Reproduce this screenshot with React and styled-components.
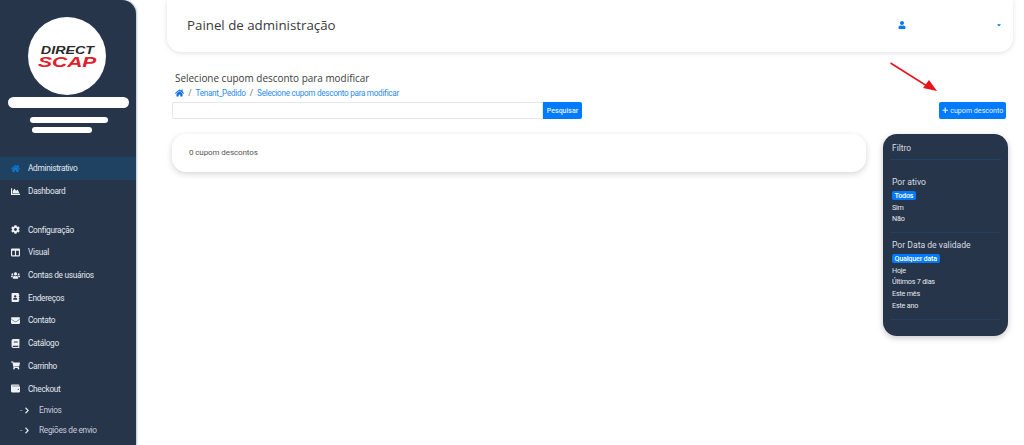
import React from "react";
import styled, { createGlobalStyle } from "styled-components";
import {
  FaHome,
  FaChartArea,
  FaCog,
  FaColumns,
  FaUsers,
  FaAddressBook,
  FaEnvelope,
  FaBook,
  FaShoppingCart,
  FaWallet,
  FaUser,
  FaCaretDown,
  FaPlus,
  FaChevronRight,
} from "react-icons/fa";

const GlobalStyle = createGlobalStyle`
  html, body {
    margin: 0;
    height: 445px;
    overflow: hidden;
    background: #fff;
    font-family: Roboto, "Liberation Sans", sans-serif;
  }
`;

const Page = styled.div`
  display: flex;
  width: 1024px;
  height: 445px;
  overflow: hidden;
  position: relative;
`;

const Sidebar = styled.aside`
  width: 136px;
  height: 445px;
  flex: none;
  background: #263549;
  border-top-right-radius: 14px;
  box-shadow: 1px 0 2px rgba(60, 80, 110, 0.35);
  padding-top: 17px;
  box-sizing: border-box;
  overflow: hidden;
`;

const Logo = styled.div`
  width: 78px;
  height: 78px;
  margin-left: 28px;
  border-radius: 50%;
  background: #fff;
  display: flex;
  flex-direction: column;
  align-items: center;
  justify-content: center;
  font-family: "Liberation Sans", sans-serif;
  font-style: italic;
  font-weight: 700;
  line-height: 1;
`;

const LogoTop = styled.span`
  font-size: 11px;
  color: #2a2a2a;
  transform: scaleX(1.3);
`;

const LogoBottom = styled.span`
  font-size: 14.5px;
  height: 12px;
  line-height: 12px;
  color: #e2202c;
  transform: scaleX(1.45);
`;

const Blur = styled.div`
  background: #fff;
  border-radius: 6px;
  height: ${(p) => p.$h}px;
  width: ${(p) => p.$w}px;
  margin-left: ${(p) => p.$x}px;
  margin-top: ${(p) => p.$top}px;
`;

const Nav = styled.nav`
  margin-top: 24px;
  display: flex;
  flex-direction: column;
`;

const NavItem = styled.a`
  height: 22.7px;
  flex: none;
  display: flex;
  align-items: center;
  padding-left: ${(p) => (p.$sub ? 20 : 11)}px;
  gap: ${(p) => (p.$sub ? 9 : 8)}px;
  font-size: 8.3px;
  letter-spacing: -0.3px;
  color: #e3e7ee;
  background: ${(p) => (p.$active ? "#1f4263" : "transparent")};
  margin-bottom: ${(p) => (p.$gap ? 16 : 0)}px;
  svg {
    width: 9px;
    height: 9px;
    flex: none;
    color: ${(p) => (p.$active ? "#0b7ad6" : "#eef1f5")};
  }
`;

const SubItem = styled(NavItem)`
  height: 20.3px;
  color: #c9c9dc;
`;

const SubArrow = styled.span`
  display: flex;
  align-items: center;
  gap: 2px;
  width: 10px;
  font-size: 8px;
  svg {
    width: 6px;
    height: 7px;
  }
`;

const Main = styled.main`
  flex: 1;
  min-width: 0;
  padding-left: 31px;
  padding-right: 16px;
`;

const Header = styled.header`
  height: 52px;
  width: 846px;
  box-sizing: border-box;
  padding: 0 11px 3px 20px;
  display: flex;
  align-items: center;
  background: #fff;
  border-radius: 0 0 14px 14px;
  box-shadow: 0 1px 5px rgba(0, 0, 0, 0.13);
`;

const Title = styled.h1`
  margin: 0;
  flex: 1;
  font-family: "Open Sans", sans-serif;
  font-size: 13.3px;
  font-weight: 400;
  color: #3a3a3a;
`;

const UserIcon = styled(FaUser)`
  width: 8px;
  height: 8px;
  color: #0a7bf0;
  margin-right: 90px;
`;

const Caret = styled(FaCaretDown)`
  width: 6px;
  height: 6px;
  color: #0a7bf0;
`;

const Content = styled.div`
  padding-top: 19px;
`;

const PageTitle = styled.h2`
  margin: 0 0 0 8px;
  font-family: "Open Sans", sans-serif;
  font-weight: 400;
  font-size: 9.95px;
  line-height: 14px;
  color: #3c3c3c;
`;

const Breadcrumb = styled.div`
  margin: 2px 0 0 8px;
  height: 11px;
  display: flex;
  align-items: center;
  gap: 4.2px;
  font-size: 8.2px;
  letter-spacing: -0.3px;
  color: #2a8cf0;
  svg {
    width: 9px;
    height: 8px;
    color: #0a6fe0;
  }
`;

const Sep = styled.span`
  color: #666;
`;

const Toolbar = styled.div`
  margin: 4px 0 0 5px;
  display: flex;
  align-items: stretch;
  height: 17px;
  width: 834px;
`;

const SearchInput = styled.input`
  width: 371px;
  box-sizing: border-box;
  border: 1px solid #e4e8ee;
  border-radius: 2px 0 0 2px;
  background: #fff;
  padding: 0;
`;

const SearchButton = styled.button`
  width: 39px;
  border: 0;
  padding: 0;
  background: #007bff;
  color: #e8f2ff;
  font: 500 7px Roboto, sans-serif;
  border-radius: 0 2px 2px 0;
`;

const AddButton = styled.button`
  margin-left: auto;
  width: 67px;
  border: 0;
  padding: 0;
  background: #007bff;
  color: #e8f2ff;
  font: 400 7.1px Roboto, sans-serif;
  border-radius: 2px;
  display: flex;
  align-items: center;
  justify-content: center;
  gap: 2px;
  svg {
    width: 6.5px;
    height: 6.5px;
  }
`;

const Columns = styled.div`
  margin: 15px 0 0 5px;
  display: flex;
  align-items: flex-start;
  gap: 17px;
  width: 836px;
`;

const ResultCard = styled.div`
  width: 694px;
  height: 38px;
  box-sizing: border-box;
  padding-left: 17px;
  padding-bottom: 2px;
  display: flex;
  align-items: center;
  background: #fff;
  border-radius: 14px;
  box-shadow: 0 2px 6px rgba(0, 0, 0, 0.17);
  font-size: 8px;
  letter-spacing: -0.1px;
  color: #555;
`;

const Filter = styled.aside`
  width: 125px;
  height: 202px;
  box-sizing: border-box;
  padding: 8px 7px 0;
  background: #263549;
  border-radius: 14px;
  box-shadow: 0 2px 6px rgba(0, 0, 0, 0.22);
  color: #e6e9ee;
`;

const FilterTitle = styled.div`
  font-size: 8.4px;
  line-height: 12px;
  padding: 0 2px 5px;
  border-bottom: 1px solid #1d4368;
  color: #d9dde4;
`;

const FilterSection = styled.div`
  padding: 0 2px 7.5px;
  border-bottom: 1px solid #25405f;
  margin-top: ${(p) => p.$top}px;
`;

const FilterHeading = styled.div`
  font-size: 8.6px;
  line-height: 12px;
  margin-bottom: 2px;
  color: #d9dde4;
`;

const FilterOption = styled.div`
  font-size: 7.2px;
  letter-spacing: -0.2px;
  height: 11.6px;
  line-height: 11.6px;
  span {
    display: inline-block;
    line-height: 9px;
    padding: 0 2.5px;
    border-radius: 2px;
    background: ${(p) => (p.$selected ? "#007bff" : "transparent")};
    margin-left: ${(p) => (p.$selected ? 0 : -2.5)}px;
    font-weight: ${(p) => (p.$selected ? 500 : 400)};
    color: ${(p) => (p.$selected ? "#fff" : "#e6e9ee")};
  }
`;

const Annotation = styled.svg`
  position: absolute;
  left: 885px;
  top: 58px;
  width: 60px;
  height: 38px;
`;

const navTop = [
  { label: "Administrativo", icon: FaHome, active: true },
  { label: "Dashboard", icon: FaChartArea, gap: true },
  { label: "Configuração", icon: FaCog },
  { label: "Visual", icon: FaColumns },
  { label: "Contas de usuários", icon: FaUsers },
  { label: "Endereços", icon: FaAddressBook },
  { label: "Contato", icon: FaEnvelope },
  { label: "Catálogo", icon: FaBook },
  { label: "Carrinho", icon: FaShoppingCart },
  { label: "Checkout", icon: FaWallet },
];

const filters = [
  { heading: "Por ativo", top: 16, options: ["Todos", "Sim", "Não"] },
  {
    heading: "Por Data de validade",
    top: 6,
    options: ["Qualquer data", "Hoje", "Últimos 7 dias", "Este mês", "Este ano"],
  },
];

export default function App() {
  return (
    <Page>
      <GlobalStyle />
      <Sidebar>
        <Logo>
          <LogoTop>DIRECT</LogoTop>
          <LogoBottom>SCAP</LogoBottom>
        </Logo>
        <Blur $w={121} $h={11} $x={8} $top={2} />
        <Blur $w={78} $h={6} $x={30} $top={9} />
        <Blur $w={60} $h={6} $x={32} $top={4} />
        <Nav>
          {navTop.map(({ label, icon: Icon, active, gap }) => (
            <NavItem key={label} $active={active} $gap={gap}>
              <Icon />
              {label}
            </NavItem>
          ))}
          {["Envios", "Regiões de envio"].map((label) => (
            <SubItem key={label} $sub>
              <SubArrow>
                -<FaChevronRight />
              </SubArrow>
              {label}
            </SubItem>
          ))}
        </Nav>
      </Sidebar>
      <Main>
        <Header>
          <Title>Painel de administração</Title>
          <UserIcon />
          <Caret />
        </Header>
        <Content>
          <PageTitle>Selecione cupom desconto para modificar</PageTitle>
          <Breadcrumb>
            <FaHome />
            <Sep>/</Sep>
            Tenant_Pedido
            <Sep>/</Sep>
            Selecione cupom desconto para modificar
          </Breadcrumb>
          <Toolbar>
            <SearchInput />
            <SearchButton>Pesquisar</SearchButton>
            <AddButton>
              <FaPlus />
              cupom desconto
            </AddButton>
          </Toolbar>
          <Columns>
            <ResultCard>0 cupom descontos</ResultCard>
            <Filter>
              <FilterTitle>Filtro</FilterTitle>
              {filters.map((group) => (
                <FilterSection key={group.heading} $top={group.top}>
                  <FilterHeading>{group.heading}</FilterHeading>
                  {group.options.map((option, i) => (
                    <FilterOption key={option} $selected={i === 0}>
                      <span>{option}</span>
                    </FilterOption>
                  ))}
                </FilterSection>
              ))}
            </Filter>
          </Columns>
        </Content>
      </Main>
      <Annotation viewBox="0 0 60 38">
        <line x1="5.5" y1="5" x2="42" y2="28" stroke="#e8141c" strokeWidth="1.5" />
        <polygon points="52,33 38,30 44,22" fill="#e8141c" />
      </Annotation>
    </Page>
  );
}
